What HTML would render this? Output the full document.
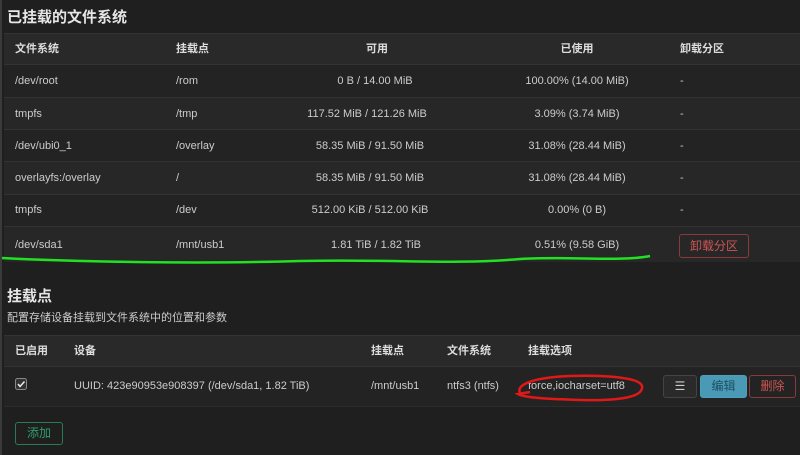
<!DOCTYPE html>
<html><head><meta charset="utf-8"><style>
*{margin:0;padding:0;box-sizing:border-box}
body{width:800px;height:455px;background:#1f1f1f;font-family:"Liberation Sans","Noto Sans CJK SC",sans-serif;color:#ccc;position:relative;overflow:hidden;font-size:11px}
.a{position:absolute;white-space:nowrap;line-height:13px}
.r{position:absolute;left:4px;right:0}
.h{font-weight:bold;color:#ddd}
.c{transform:translateX(-50%)}
.btn{position:absolute;border:1px solid;border-radius:3px;text-align:center;font-size:12px}
.d{margin-top:1px}
</style></head><body>
<div class="a" style="left:0;top:0;bottom:0;width:2px;background:#3a3a3a"></div>
<div class="a h" style="left:7px;top:9px;font-size:15px;line-height:18px;color:#e6e6e6">已挂载的文件系统</div>
<div class="r" style="top:33px;height:31px;background:#292929;border-top:1px solid #333"></div>
<div class="r" style="top:64px;height:33px;background:#232323;border-top:1px solid #333"></div>
<div class="r" style="top:97px;height:32px;background:#272727;border-top:1px solid #333"></div>
<div class="r" style="top:129px;height:32px;background:#232323;border-top:1px solid #333"></div>
<div class="r" style="top:161px;height:33px;background:#272727;border-top:1px solid #333"></div>
<div class="r" style="top:194px;height:32px;background:#232323;border-top:1px solid #333"></div>
<div class="r" style="top:226px;height:36px;background:#272727;border-top:1px solid #333"></div>

<div class="a h" style="left:15px;top:43px">文件系统</div>
<div class="a h" style="left:176px;top:43px">挂载点</div>
<div class="a h c" style="left:377px;top:43px">可用</div>
<div class="a h c" style="left:577px;top:43px">已使用</div>
<div class="a h" style="left:680px;top:43px">卸载分区</div>

<div class="a" style="left:15px;top:75px">/dev/root</div><div class="a" style="left:176px;top:75px">/rom</div><div class="a c" style="left:375px;top:75px">0 B / 14.00 MiB</div><div class="a c" style="left:577px;top:75px">100.00% (14.00 MiB)</div><div class="a" style="left:680px;top:75px">-</div>
<div class="a" style="left:15px;top:108px">tmpfs</div><div class="a" style="left:176px;top:108px">/tmp</div><div class="a c" style="left:367px;top:108px">117.52 MiB / 121.26 MiB</div><div class="a c" style="left:577px;top:108px">3.09% (3.74 MiB)</div><div class="a" style="left:680px;top:108px">-</div>
<div class="a" style="left:15px;top:140px">/dev/ubi0_1</div><div class="a" style="left:176px;top:140px">/overlay</div><div class="a c" style="left:370px;top:140px">58.35 MiB / 91.50 MiB</div><div class="a c" style="left:577px;top:140px">31.08% (28.44 MiB)</div><div class="a" style="left:680px;top:140px">-</div>
<div class="a" style="left:15px;top:172px">overlayfs:/overlay</div><div class="a" style="left:176px;top:172px">/</div><div class="a c" style="left:370px;top:172px">58.35 MiB / 91.50 MiB</div><div class="a c" style="left:577px;top:172px">31.08% (28.44 MiB)</div><div class="a" style="left:680px;top:172px">-</div>
<div class="a" style="left:15px;top:204px">tmpfs</div><div class="a" style="left:176px;top:204px">/dev</div><div class="a c" style="left:370px;top:204px">512.00 KiB / 512.00 KiB</div><div class="a c" style="left:577px;top:204px">0.00% (0 B)</div><div class="a" style="left:680px;top:204px">-</div>
<div class="a" style="left:15px;top:239px">/dev/sda1</div><div class="a" style="left:176px;top:239px">/mnt/usb1</div><div class="a c" style="left:376px;top:239px">1.81 TiB / 1.82 TiB</div><div class="a c" style="left:577px;top:239px">0.51% (9.58 GiB)</div>
<div class="btn" style="left:679px;top:234px;width:70px;height:24px;line-height:22px;border-color:#8a3a3a;color:#d05555">卸载分区</div>

<div class="a h" style="left:7px;top:288px;font-size:15px;line-height:18px;color:#e6e6e6">挂载点</div>
<div class="a" style="left:7px;top:312px">配置存储设备挂载到文件系统中的位置和参数</div>
<div class="r" style="top:335px;height:31px;background:#292929;border-top:1px solid #333"></div>
<div class="r" style="top:366px;height:41px;background:#232323;border-top:1px solid #333;border-bottom:1px solid #2c2c2c"></div>
<div class="a h" style="left:15px;top:345px">已启用</div>
<div class="a h" style="left:74px;top:345px">设备</div>
<div class="a h" style="left:371px;top:345px">挂载点</div>
<div class="a h" style="left:447px;top:345px">文件系统</div>
<div class="a h" style="left:528px;top:345px">挂载选项</div>
<svg class="a" style="left:15px;top:378px" width="12" height="12"><rect x="0.5" y="0.5" width="11" height="11" rx="2" fill="#333" stroke="#888"/><path d="M3 6 L5 8.5 L9.5 3.5" stroke="#eee" stroke-width="1.5" fill="none"/></svg>
<div class="a" style="left:74px;top:380px">UUID: 423e90953e908397 (/dev/sda1, 1.82 TiB)</div>
<div class="a" style="left:371px;top:380px">/mnt/usb1</div>
<div class="a" style="left:447px;top:380px">ntfs3 (ntfs)</div>
<div class="a" style="left:528px;top:380px">force,iocharset=utf8</div>
<div class="btn" style="left:663px;top:375px;width:34px;height:23px;line-height:21px;border-color:#444;background:#2a2a2a;color:#ccc">☰</div>
<div class="btn" style="left:700px;top:375px;width:47px;height:23px;line-height:21px;border-color:#4aa0bd;background:#4a9ab5;color:#1e4f63">编辑</div>
<div class="btn" style="left:749px;top:375px;width:47px;height:23px;line-height:21px;border-color:#8a3a3a;color:#d05555">删除</div>
<div class="btn" style="left:15px;top:422px;width:48px;height:23px;line-height:21px;border-color:#2a7a55;color:#2f9c6a">添加</div>

<svg class="a" style="left:0;top:0" width="800" height="455">
<path d="M2 258 C80 262 200 264 300 261 C400 259 450 265 520 259 C570 256 620 262 650 256" stroke="#22e022" stroke-width="2.5" fill="none"/>
<path d="M520 393 C515 383 540 377 570 376 C610 375 640 378 642 386 C644 397 620 401 580 400 C550 399 525 398 518 394 L530 392" stroke="#e01818" stroke-width="2.5" fill="none"/>
</svg>
</body></html>
